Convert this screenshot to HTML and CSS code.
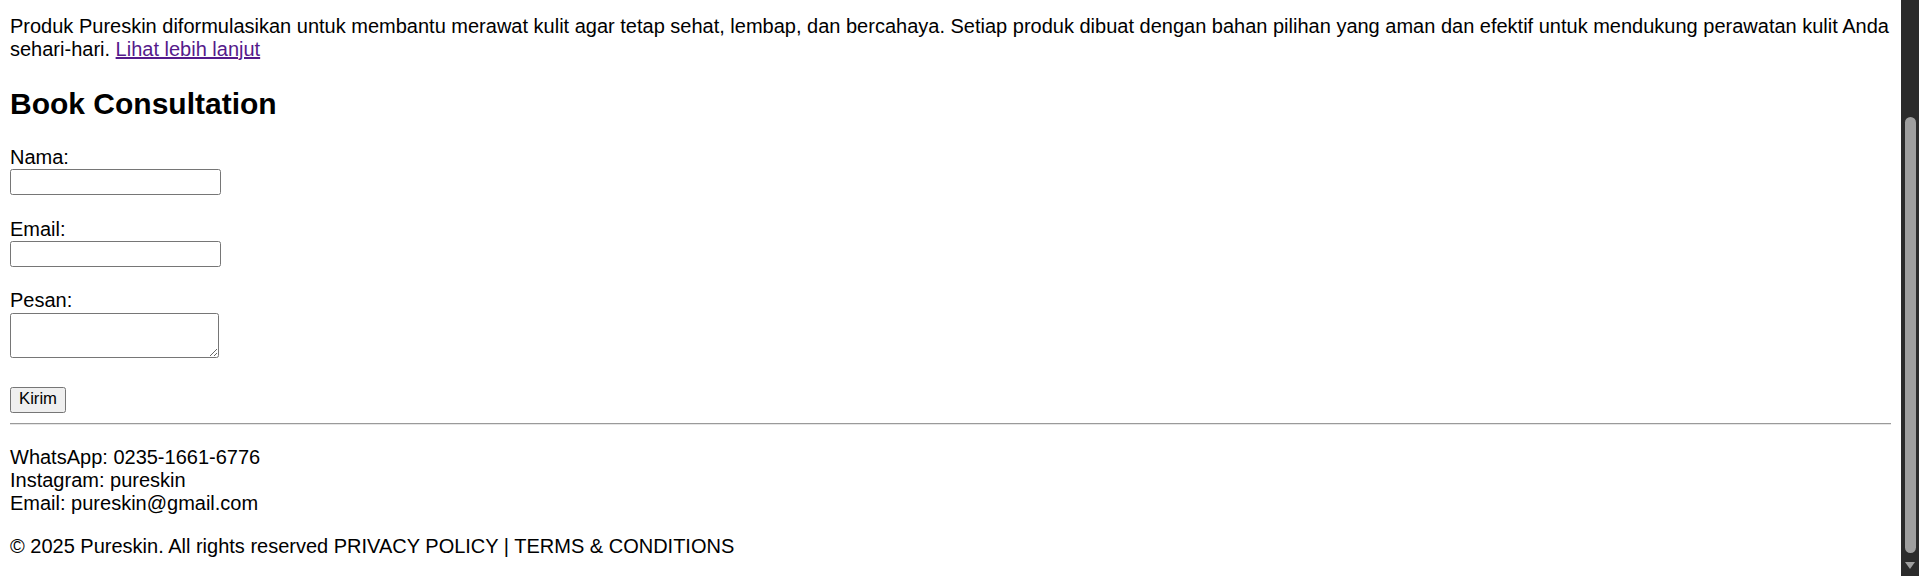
FILE: index.html
```html
<!DOCTYPE html>
<html lang="id">
<head>
<meta charset="utf-8">
<title>Pureskin</title>
<link rel="stylesheet" href="styles.css">
</head>
<body>
<main class="page">
  <p class="intro">Produk Pureskin diformulasikan untuk membantu merawat kulit agar tetap sehat, lembap, dan bercahaya. Setiap produk dibuat dengan bahan pilihan yang aman dan efektif untuk mendukung perawatan kulit Anda sehari-hari. <a class="more" href="#">Lihat lebih lanjut</a></p>

  <h2 class="title">Book Consultation</h2>

  <form class="form">
    <label class="label" for="nama">Nama:</label>
    <input class="field" type="text" id="nama">
    <label class="label label-gap" for="email">Email:</label>
    <input class="field" type="email" id="email">
    <label class="label label-gap2" for="pesan">Pesan:</label>
    <textarea class="area" id="pesan"></textarea>
    <button class="btn" type="button">Kirim</button>
  </form>

  <hr class="rule">

  <footer class="footer">
    <p class="contact">WhatsApp: 0235-1661-6776<br>Instagram: pureskin<br>Email: pureskin@gmail.com</p>
    <p class="copy">© 2025 Pureskin. All rights reserved <span class="legal">PRIVACY POLICY</span> | <span class="legal">TERMS &amp; CONDITIONS</span></p>
  </footer>
</main>
<aside class="scrollbar" aria-hidden="true">
  <div class="thumb"></div>
  <div class="arrow"></div>
</aside>
</body>
</html>
```

FILE: styles.css
```css
html {
  overflow: hidden;
}

body {
  margin: 0;
  height: 576px;
  display: flex;
  overflow: hidden;
  background: #ffffff;
  color: #000000;
  font-family: "Liberation Sans", Arial, sans-serif;
  font-size: 20px;
  line-height: 23px;
}

.page {
  flex: 1;
  min-width: 0;
  padding: 0 10px;
}

.intro {
  margin: 14.5px 0 20px;
}

.more {
  color: #551a8b;
  text-decoration: underline;
}

.title {
  font-size: 30px;
  line-height: 34.5px;
  font-weight: bold;
  margin: 26px 0 25px;
}

.form {
  display: flex;
  flex-direction: column;
  align-items: flex-start;
}

.label {
  display: block;
  line-height: 23px;
}

.label-gap {
  margin-top: 22.5px;
}

.label-gap2 {
  margin-top: 22px;
}

.field {
  appearance: none;
  box-sizing: border-box;
  display: block;
  width: 211px;
  height: 26px;
  margin: 0;
  padding: 1px 2px;
  border: 1px solid #767676;
  border-radius: 2.5px;
  background: #ffffff;
  font-family: "Liberation Sans", Arial, sans-serif;
  font-size: 16.67px;
}

.area {
  appearance: none;
  box-sizing: border-box;
  display: block;
  width: 209px;
  height: 45.5px;
  margin: 1px 0 0;
  padding: 2px;
  border: 1px solid #767676;
  border-radius: 2.5px;
  background: #ffffff;
  font-family: "Liberation Mono", monospace;
  font-size: 16.67px;
  resize: both;
}

.btn {
  appearance: none;
  box-sizing: border-box;
  width: 56px;
  height: 26.5px;
  margin: 28.5px 0 0;
  padding: 0;
  border: 1px solid #767676;
  border-radius: 2.5px;
  background: #efefef;
  color: #000000;
  font-family: "Liberation Sans", Arial, sans-serif;
  font-size: 16.67px;
  line-height: 1;
}

.rule {
  margin: 10px 0 0;
  height: 0;
  border: none;
  border-top: 1px solid #9a9a9a;
  border-bottom: 1px solid #e6e6e6;
}

.footer {
  padding-top: 20.5px;
}

.contact {
  margin: 0;
}

.copy {
  margin: 20px 0 0;
}

.scrollbar {
  flex: 0 0 18px;
  height: 576px;
  background: #2b2b2b;
  display: flex;
  flex-direction: column;
  align-items: center;
}

.thumb {
  width: 11px;
  height: 436px;
  margin-top: 117px;
  border-radius: 6px;
  background: #9f9f9f;
}

.arrow {
  margin-top: 9px;
  width: 0;
  height: 0;
  border-left: 5.5px solid transparent;
  border-right: 5.5px solid transparent;
  border-top: 7px solid #9f9f9f;
}
```
